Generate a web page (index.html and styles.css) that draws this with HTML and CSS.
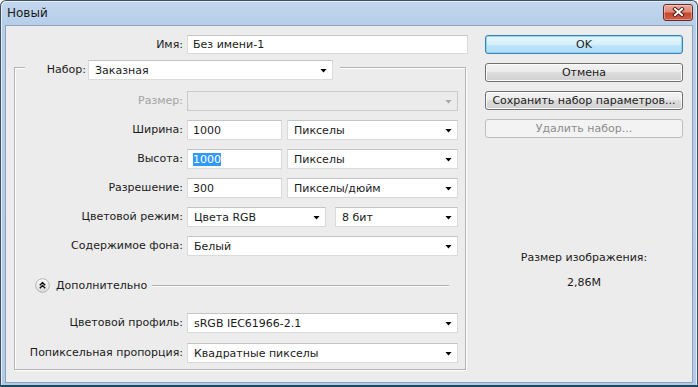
FILE: index.html
```html
<!DOCTYPE html>
<html lang="ru">
<head>
<meta charset="utf-8">
<title>Новый</title>
<link rel="stylesheet" href="styles.css">
</head>
<body>
<div class="window">
  <div class="titlebar">
    <span class="title">Новый</span>
    <div class="close">
      <svg width="13" height="10" viewBox="0 0 13 10">
        <path d="M3 2 L10 8 M10 2 L3 8" stroke="#4a1a12" stroke-width="3.8" stroke-linecap="square" fill="none"/>
        <path d="M3 2 L10 8 M10 2 L3 8" stroke="#ffffff" stroke-width="2" stroke-linecap="square" fill="none"/>
      </svg>
    </div>
  </div>
  <div class="client">
    <div class="left">
      <div class="name-row">
        <span class="lbl">Имя:</span>
        <div class="field name-field">Без имени-1</div>
      </div>
      <div class="group">
        <div class="group-head">
          <span class="lbl head-lbl">Набор:</span>
          <div class="select preset"><span>Заказная</span><i class="arrow"></i></div>
        </div>
        <div class="rows rows-main">
          <span class="lbl disabled">Размер:</span>
          <div class="select is-disabled"><span></span><i class="arrow"></i></div>

          <span class="lbl">Ширина:</span>
          <div class="pair">
            <div class="field num">1000</div>
            <div class="select unit"><span>Пикселы</span><i class="arrow"></i></div>
          </div>

          <span class="lbl">Высота:</span>
          <div class="pair">
            <div class="field num"><span class="sel">1000</span></div>
            <div class="select unit"><span>Пикселы</span><i class="arrow"></i></div>
          </div>

          <span class="lbl">Разрешение:</span>
          <div class="pair">
            <div class="field num">300</div>
            <div class="select unit"><span>Пикселы/дюйм</span><i class="arrow"></i></div>
          </div>

          <span class="lbl">Цветовой режим:</span>
          <div class="pair mode">
            <div class="select mode-a"><span>Цвета RGB</span><i class="arrow"></i></div>
            <div class="select mode-b"><span>8 бит</span><i class="arrow"></i></div>
          </div>

          <span class="lbl">Содержимое фона:</span>
          <div class="select"><span>Белый</span><i class="arrow"></i></div>
        </div>

        <div class="advanced">
          <svg class="adv-icon" width="15" height="15" viewBox="0 0 15 15">
            <defs>
              <linearGradient id="ag" x1="0" y1="0" x2="0" y2="1">
                <stop offset="0" stop-color="#ffffff"/>
                <stop offset="1" stop-color="#d9d9d9"/>
              </linearGradient>
            </defs>
            <circle cx="7.5" cy="7.5" r="6.8" fill="url(#ag)" stroke="#b3b3b3" stroke-width="1"/>
            <path d="M4.8 7.3 L7.5 4.6 L10.2 7.3 M4.8 10.3 L7.5 7.6 L10.2 10.3" stroke="#111" stroke-width="1.4" fill="none"/>
          </svg>
          <span class="adv-text">Дополнительно</span>
          <span class="adv-line"></span>
        </div>

        <div class="rows rows-extra">
          <span class="lbl">Цветовой профиль:</span>
          <div class="select"><span>sRGB IEC61966-2.1</span><i class="arrow"></i></div>

          <span class="lbl">Попиксельная пропорция:</span>
          <div class="select"><span>Квадратные пикселы</span><i class="arrow"></i></div>
        </div>
      </div>
    </div>

    <div class="right">
      <div class="btn btn-default">OK</div>
      <div class="btn">Отмена</div>
      <div class="btn">Сохранить набор параметров...</div>
      <div class="btn btn-disabled">Удалить набор...</div>
      <div class="info">
        <div>Размер изображения:</div>
        <div>2,86M</div>
      </div>
    </div>
  </div>
</div>
</body>
</html>
```

FILE: styles.css
```css
* { box-sizing: border-box; }

html, body {
  margin: 0;
  padding: 0;
  width: 698px;
  height: 387px;
  overflow: hidden;
  background: #ffffff;
}

body {
  font-family: "DejaVu Sans", Tahoma, sans-serif;
  font-size: 11px;
  color: #1b1b1b;
}

.window {
  width: 698px;
  height: 387px;
  border: 1px solid #3f5060;
  border-bottom: 2px solid #1d4b60;
  border-radius: 6px 6px 0 0;
  padding: 0 4px 2px 4px;
  background: linear-gradient(#c3d8ee 0px, #b6cee9 24px, #b3cbe7 100%);
  box-shadow: inset 1px 1px 0 #e3edf8, inset -1px 0 0 #e3edf8;
  display: flex;
  flex-direction: column;
}

.titlebar {
  height: 24px;
  display: flex;
  align-items: center;
  justify-content: space-between;
  padding-left: 2px;
  flex: none;
}

.title {
  font-size: 12px;
  color: #1a1a1a;
}

.close {
  width: 30px;
  height: 17px;
  margin-top: -2px;
  border: 1px solid #6b2a22;
  border-radius: 3px;
  background: linear-gradient(#e9a99b 0%, #dd8a78 45%, #c7462f 55%, #d0604a 100%);
  box-shadow: inset 0 0 0 1px rgba(255,255,255,0.35);
  display: flex;
  align-items: center;
  justify-content: center;
}

.close svg { display: block; }

.client {
  flex: 1;
  border: 1px solid #8da3bb;
  background: #ececec;
  padding-top: 9px;
  display: flex;
  align-items: flex-start;
}

.left {
  width: 462px;
  flex: none;
}

.lbl {
  text-align: right;
  white-space: nowrap;
  line-height: 20px;
}

.lbl.disabled { color: #a3a3a3; }

.name-row {
  display: grid;
  grid-template-columns: 177px 281px;
  column-gap: 4px;
  height: 19px;
  align-items: center;
}

.name-row .lbl { line-height: 19px; }

.field {
  height: 20px;
  background: #ffffff;
  border: 1px solid #dadada;
  border-top-color: #c4c4c4;
  padding-left: 5px;
  display: flex;
  align-items: center;
  white-space: nowrap;
}

.name-field { height: 19px; }

.sel {
  background: #3399ff;
  color: #ffffff;
  line-height: 13px;
}

.select {
  height: 20px;
  background: #ffffff;
  border: 1px solid #dadada;
  border-top-color: #c4c4c4;
  padding: 0 5px 0 6px;
  display: flex;
  align-items: center;
  justify-content: space-between;
  white-space: nowrap;
}

.arrow {
  display: block;
  width: 7px;
  height: 4px;
  background: #000000;
  clip-path: polygon(0 0, 100% 0, 50% 100%);
  margin-top: 1px;
}

.select.is-disabled {
  background: #ebebeb;
  border-color: #cacaca;
}

.select.is-disabled .arrow { background: #a6a6a6; }

.group {
  margin: 13px 0 0 8px;
  width: 452px;
  border: 1px solid #b4b4b4;
  box-shadow: inset 1px 1px 0 #ffffff, 1px 1px 0 #ffffff;
  padding-bottom: 6px;
}

.group-head {
  margin: -8px 0 0 10px;
  width: max-content;
  display: flex;
  align-items: center;
  gap: 2px;
  padding: 0 7px 0 20px;
  background: #ececec;
}

.head-lbl {
  width: 41px;
}

.preset { width: 245px; }

.rows {
  display: grid;
  grid-template-columns: 168px 271px;
  column-gap: 4px;
  grid-auto-rows: 20px;
  align-items: center;
}

.rows-main {
  margin-top: 11px;
  row-gap: 9px;
}

.rows-extra {
  margin-top: 20px;
  row-gap: 10px;
}

.pair {
  display: flex;
  gap: 5px;
}

.pair .num { width: 95px; }
.pair .unit { width: 171px; }

.pair.mode { gap: 9px; }
.mode-a { width: 139px; }
.mode-b { width: 123px; }

.advanced {
  margin-top: 22px;
  height: 15px;
  display: flex;
  align-items: center;
  padding: 0 16px 0 20px;
}

.adv-icon { display: block; flex: none; }

.adv-text {
  margin-left: 6px;
  white-space: nowrap;
}

.adv-line {
  flex: 1;
  margin-left: 5px;
  height: 2px;
  border-top: 1px solid #b0b0b0;
  border-bottom: 1px solid #ffffff;
}

.right {
  margin-left: 17px;
  width: 198px;
  flex: none;
  display: flex;
  flex-direction: column;
  gap: 9px;
}

.btn {
  height: 19px;
  border: 1px solid #707070;
  border-radius: 3px;
  background: linear-gradient(#f3f3f3 0%, #ebebeb 50%, #dddddd 50%, #cfcfcf 100%);
  box-shadow: inset 0 0 0 1px #fbfbfb;
  display: flex;
  align-items: center;
  justify-content: center;
  white-space: nowrap;
  color: #1b1b1b;
}

.btn-default {
  border-color: #3c7fb1;
  background: linear-gradient(#e6f6fd 0%, #d6effb 50%, #bfe6fa 50%, #aedcf3 100%);
  box-shadow: inset 0 0 0 1px #8fd4f4;
}

.btn-disabled {
  border-color: #b9bdc0;
  background: #f3f3f3;
  box-shadow: none;
  color: #8c8c8c;
}

.info {
  margin-top: 104px;
  display: flex;
  flex-direction: column;
  align-items: center;
  gap: 12px;
  line-height: 13px;
}
```
